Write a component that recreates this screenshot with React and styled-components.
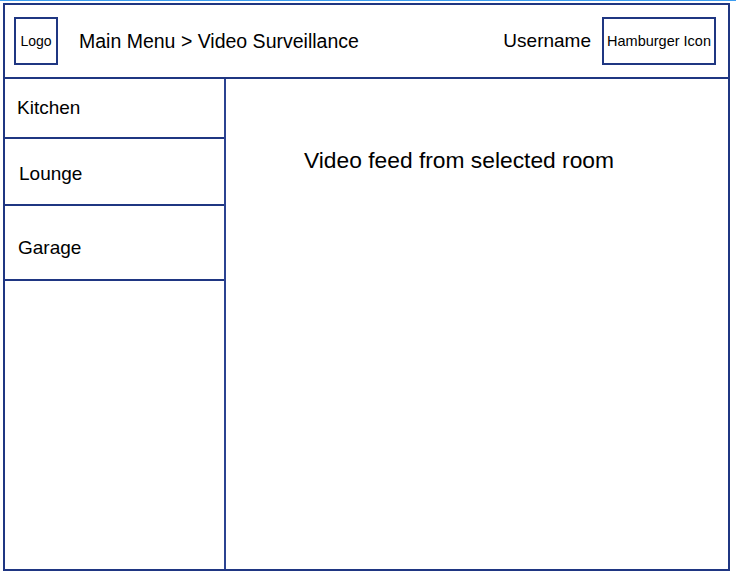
import React from "react";
import styled, { createGlobalStyle } from "styled-components";

const navy = "#1f3682";

const GlobalStyle = createGlobalStyle`
  html, body { margin: 0; padding: 0; background: #ffffff; }
  body { font-family: "Liberation Sans", Arial, sans-serif; color: #000; }
  * { box-sizing: border-box; }
`;

const Page = styled.div`
  position: relative;
  width: 736px;
  height: 576px;
  background: #fff;
  border-top: 1px solid #3d9df0;
  padding: 2px 0 0 3px;
`;

const Frame = styled.div`
  width: 727px;
  height: 568px;
  border: 2px solid ${navy};
  display: flex;
  flex-direction: column;
`;

const Header = styled.header`
  height: 74px;
  flex: none;
  border-bottom: 2px solid ${navy};
  display: flex;
  align-items: center;
  padding: 0 12px 0 9px;
`;

const Box = styled.div`
  width: ${(p) => p.$w}px;
  height: 48px;
  border: 2px solid ${navy};
  display: flex;
  align-items: center;
  justify-content: center;
  font-size: ${(p) => p.$fs || 14}px;
  white-space: nowrap;
  flex: none;
`;

const Crumb = styled.div`
  margin-left: 21px;
  font-size: 19.5px;
  flex: 1;
  white-space: nowrap;
`;

const User = styled.div`
  font-size: 19px;
  margin-right: 11px;
  white-space: nowrap;
`;

const Body = styled.div`
  flex: 1;
  display: flex;
  min-height: 0;
`;

const Sidebar = styled.nav`
  width: 221px;
  flex: none;
  border-right: 2px solid #2b4391;
  display: flex;
  flex-direction: column;
`;

const Item = styled.div`
  height: ${(p) => p.$h}px;
  border-bottom: 2px solid ${navy};
  display: flex;
  align-items: center;
  padding-left: ${(p) => p.$indent}px;
  padding-top: ${(p) => p.$shift}px;
  font-size: 19px;
`;

const Content = styled.main`
  flex: 1;
  padding: 68px 0 0 78px;
  font-size: 22.8px;
  line-height: 27px;
`;

const rooms = [
  { name: "Kitchen", h: 60, indent: 12, shift: 0 },
  { name: "Lounge", h: 67, indent: 14, shift: 5 },
  { name: "Garage", h: 75, indent: 13, shift: 11 },
];

export default function App() {
  return (
    <>
      <GlobalStyle />
      <Page>
        <Frame>
          <Header>
            <Box $w={44}>Logo</Box>
            <Crumb>Main Menu &gt; Video Surveillance</Crumb>
            <User>Username</User>
            <Box $w={114} $fs={14.5}>Hamburger Icon</Box>
          </Header>
          <Body>
            <Sidebar>
              {rooms.map((r) => (
                <Item key={r.name} $h={r.h} $indent={r.indent} $shift={r.shift}>
                  {r.name}
                </Item>
              ))}
            </Sidebar>
            <Content>Video feed from selected room</Content>
          </Body>
        </Frame>
      </Page>
    </>
  );
}
